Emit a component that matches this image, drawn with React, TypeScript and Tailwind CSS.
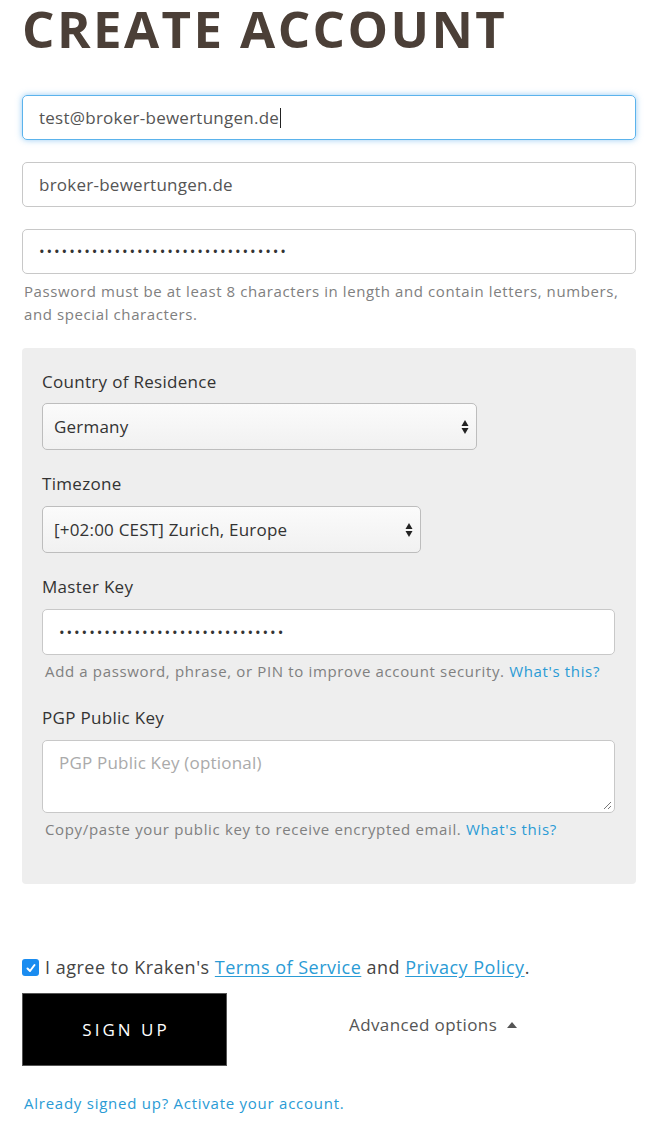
import { useState } from 'react'

const font = { fontFamily: '"Open Sans", "Lato", sans-serif' }

const Select = ({ value, width }: { value: string, width: string }) => (
    <div className={`relative flex items-center h-[47px] ${width} rounded-[5px] border border-[#bdbdbd] bg-gradient-to-b from-[#fbfbfb] to-[#f1f1f1] px-[11px] text-[17px] tracking-[0.2px] text-[#333]`}>
        <span>{value}</span>
        <svg className="absolute right-[7px] top-1/2 -translate-y-1/2" width="8" height="16" viewBox="0 0 8 16">
            <path d="M4 1 L7.5 7 H0.5 Z" fill="#222" />
            <path d="M4 15 L7.5 9 H0.5 Z" fill="#222" />
        </svg>
    </div>
)

const Help = ({ text, link }: { text: string, link?: string }) => (
    <p className="pl-[3px] text-[15px] leading-[22px] text-[#808080] tracking-[0.65px]">
        {text} {link && <a className="text-[#2a9bd5]">{link}</a>}
    </p>
)

export default function App() {
    const [agree, setAgree] = useState(true)

    return (
        <div className="w-[650px] min-h-[1132px] bg-white px-[22px] pb-10" style={font}>
            <h1 className="text-[51px] font-bold leading-[56px] tracking-[2.4px] text-[#4b3f37]">
                CREATE ACCOUNT
            </h1>

            <div className="mt-[39px] flex flex-col gap-[22px] w-[614px]">
                <div className="h-[45px] rounded-[5px] border border-[#5bb3ec] shadow-[0_0_6px_rgba(82,168,236,0.6)] flex items-center px-[16px] text-[17px] tracking-[0.25px] text-[#555]">
                    test@broker-bewertungen.de<span className="w-px h-[20px] bg-[#222] ml-px" />
                </div>
                <div className="h-[45px] rounded-[5px] border border-[#c8c8c8] flex items-center px-[16px] text-[17px] tracking-[0.25px] text-[#555]">
                    broker-bewertungen.de
                </div>
                <div>
                    <div className="h-[45px] rounded-[5px] border border-[#c8c8c8] flex items-center px-[16px] text-[15px] tracking-[1.9px] text-[#333]">
                        {'•'.repeat(33)}
                    </div>
                    <p className="mt-[6px] pl-[2px] text-[15px] leading-[23px] text-[#808080] tracking-[0.6px]">
                        Password must be at least 8 characters in length and contain letters, numbers, and special characters.
                    </p>
                </div>
            </div>

            <div className="mt-[22px] w-[614px] rounded-[4px] bg-[#eeeeee] pl-[20px] pr-[21px] pt-[22px] pb-[44px] text-[#333]">
                <label className="block text-[17px] leading-[24px] tracking-[0.3px]">Country of Residence</label>
                <div className="mt-[9px]">
                    <Select value="Germany" width="w-[435px]" />
                </div>

                <label className="block mt-[22px] text-[17px] leading-[24px] tracking-[0.3px]">Timezone</label>
                <div className="mt-[10px]">
                    <Select value="[+02:00 CEST] Zurich, Europe" width="w-[379px]" />
                </div>

                <label className="block mt-[22px] text-[17px] leading-[24px] tracking-[0.3px]">Master Key</label>
                <div className="mt-[10px] h-[46px] rounded-[5px] border border-[#c8c8c8] bg-white flex items-center px-[16px] text-[15px] tracking-[1.9px] text-[#333]">
                    {'•'.repeat(30)}
                </div>
                <div className="mt-[5px]">
                    <Help text="Add a password, phrase, or PIN to improve account security." link="What's this?" />
                </div>

                <label className="block mt-[24px] text-[17px] leading-[24px] tracking-[0.3px]">PGP Public Key</label>
                <div className="relative mt-[10px] h-[73px] rounded-[5px] border border-[#c8c8c8] bg-white px-[16px] pt-[9px] text-[17px] tracking-[0.2px] text-[#aaa]">
                    PGP Public Key (optional)
                    <svg className="absolute right-[2px] bottom-[2px]" width="9" height="9" viewBox="0 0 9 9">
                        <path d="M8 1 L1 8 M8 5 L5 8" stroke="#777" strokeWidth="1" />
                    </svg>
                </div>
                <div className="mt-[5px]">
                    <Help text="Copy/paste your public key to receive encrypted email." link="What's this?" />
                </div>
            </div>

            <div className="mt-[70px] flex items-center gap-[6px] text-[18px] text-[#444]">
                <button
                    onClick={() => setAgree(!agree)}
                    className={`w-[17px] h-[17px] rounded-[3px] flex items-center justify-center ${agree ? 'bg-[#1a8cf0]' : 'border border-[#999] bg-white'}`}
                >
                    {agree && (
                        <svg width="12" height="12" viewBox="0 0 12 12">
                            <path d="M2.5 6.5 L5 9 L9.5 3" stroke="white" strokeWidth="2" fill="none" strokeLinecap="round" strokeLinejoin="round" />
                        </svg>
                    )}
                </button>
                <span className="tracking-[0.5px]">
                    I agree to Kraken's <a className="text-[#2a9bd5] underline underline-offset-2">Terms of Service</a> and <a className="text-[#2a9bd5] underline underline-offset-2">Privacy Policy</a>.
                </span>
            </div>

            <div className="mt-[12px] flex items-center">
                <button className="w-[205px] h-[73px] bg-black border border-[#555] text-white text-[17px] tracking-[3px] pl-[3px]">
                    SIGN UP
                </button>
                <div className="ml-[122px] -mt-[10px] flex items-center gap-[10px] text-[17px] tracking-[0.4px] text-[#555]">
                    Advanced options
                    <svg width="10" height="6" viewBox="0 0 10 6">
                        <path d="M5 0 L10 6 H0 Z" fill="#555" />
                    </svg>
                </div>
            </div>

            <p className="mt-[26px] pl-[2px] text-[15px] text-[#2a9bd5] tracking-[0.75px]">
                Already signed up? Activate your account.
            </p>
        </div>
    )
}
